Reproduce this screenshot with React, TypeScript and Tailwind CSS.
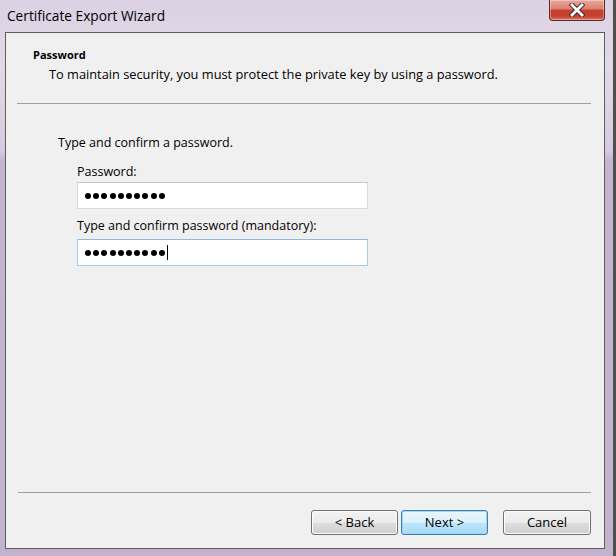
import React from "react";

const font = { fontFamily: '"Open Sans", "Noto Sans", sans-serif' };

function Dots({ n }: { n: number }) {
  return (
    <span className="flex items-center gap-[2.2px]">
      {Array.from({ length: n }).map((_, i) => (
        <span key={i} className="block w-[6px] h-[6px] rounded-full bg-black" />
      ))}
    </span>
  );
}

function WinButton({ label, focused, className }: { label: string; focused?: boolean; className?: string }) {
  return (
    <div
      className={
        "h-[25px] rounded-[3px] border flex items-center justify-center text-[13px] text-black " +
        (focused
          ? "border-[#3c7fb1] shadow-[inset_0_0_0_1px_#9fd7f5] bg-[linear-gradient(to_bottom,#eaf6fd_0%,#d9f0fc_50%,#bee6fd_51%,#a7d9f5_100%)] "
          : "border-[#707070] shadow-[inset_0_0_0_1px_#fcfcfc] bg-[linear-gradient(to_bottom,#f2f2f2_0%,#ebebeb_50%,#dddddd_51%,#cfcfcf_100%)] ") +
        (className ?? "")
      }
    >
      {label}
    </div>
  );
}

export default function App() {
  return (
    <div
      className="w-[616px] h-[556px] flex flex-col border-r-[3px] border-r-[#4f4f4f] bg-[linear-gradient(to_bottom,#dbd1e2_0%,#e2d9e8_12%,#d6cbde_27%,#c4b4cc_29%,#c2b2cb_100%)]"
      style={font}
    >
      {/* title bar */}
      <div className="h-[32px] flex items-start justify-between">
        <div className="pl-[7px] pt-[6px] text-[13.7px] leading-[20px] text-black">Certificate Export Wizard</div>
        <div className="mr-[8px] w-[56px] h-[21px] rounded-b-[4px] border border-t-0 border-[#5b2b27] bg-[linear-gradient(to_bottom,#e9a99c_0%,#dc7e6e_45%,#c8402f_50%,#c4402f_80%,#d9735f_100%)] flex items-center justify-center shadow-[inset_0_0_0_1px_rgba(255,255,255,0.35)]">
          <svg width="16" height="14" viewBox="0 0 16 14">
            <path
              d="M3 2 L13 12 M13 2 L3 12"
              stroke="#3a2a2a"
              strokeWidth="4.6"
              strokeLinecap="square"
              fill="none"
            />
            <path
              d="M3 2 L13 12 M13 2 L3 12"
              stroke="#ffffff"
              strokeWidth="2.8"
              strokeLinecap="square"
              fill="none"
            />
          </svg>
        </div>
      </div>

      {/* body */}
      <div className="flex-1 flex pl-[5px] pr-[8px] pb-[7px]">
        <div className="flex-1 border border-[#5e5e5e] bg-[#f0f0f0] flex flex-col text-black">
          <div className="pt-[15px] pl-[27px]">
            <div className="text-[11px] leading-[14px] font-bold">Password</div>
            <div className="mt-[3px] ml-[16px] text-[12.8px] leading-[18px]">
              To maintain security, you must protect the private key by using a password.
            </div>
          </div>
          <div className="mt-[20px] ml-[11px] mr-[13px] h-px bg-[#a0a0a0]" />

          <div className="mt-[30px] ml-[52px] text-[12.5px] leading-[18px]">Type and confirm a password.</div>
          <div className="ml-[71px] w-[291px]">
            <div className="mt-[11px] text-[12.5px] leading-[18px]">Password:</div>
            <div className="mt-[1px] h-[27px] bg-white border border-[#dadada] border-t-[#c8c8c8] flex items-center pl-[7px]">
              <Dots n={10} />
            </div>
            <div className="mt-[8px] text-[12.5px] leading-[18px]">Type and confirm password (mandatory):</div>
            <div className="mt-[4px] h-[27px] bg-white border border-[#a9cbe9] border-t-[#8fb9e2] flex items-center pl-[7px]">
              <Dots n={10} />
              <span className="block ml-[2px] w-px h-[15px] bg-black" />
            </div>
          </div>

          <div className="flex-1" />
          <div className="ml-[12px] mr-[13px] h-px bg-[#a0a0a0]" />
          <div className="mt-[17px] mb-[13px] pr-[13px] flex justify-end">
            <WinButton label="< Back" className="w-[87px]" />
            <WinButton label="Next >" focused className="w-[87px] ml-[3px]" />
            <WinButton label="Cancel" className="w-[88px] ml-[15px]" />
          </div>
        </div>
      </div>
    </div>
  );
}
